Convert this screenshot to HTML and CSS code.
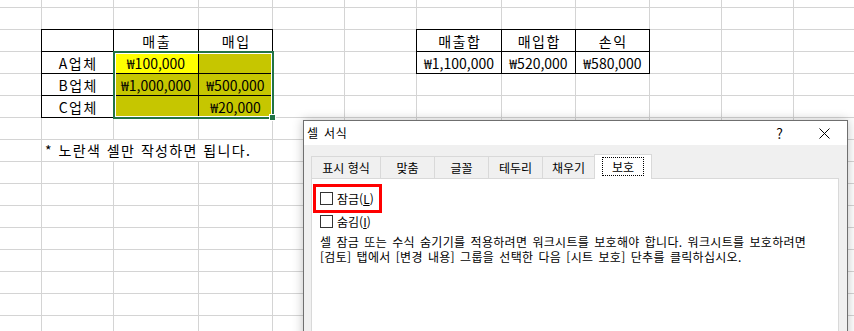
FILE: index.html
```html
<!DOCTYPE html>
<html lang="ko">

<head>
  <meta charset="UTF-8">
  <title>셀 서식</title>
  <link rel="stylesheet" href="styles.css">
</head>

<body>
  <div class="sheet">
    <div class="cell box c2 r3"></div>
    <div class="cell box kr c3 r3">매출</div>
    <div class="cell box kr c4 r3">매입</div>

    <div class="cell box kr c2 r4">A업체</div>
    <div class="cell box c3 r4 yellow">₩100,000</div>
    <div class="cell box c4 r4 olive"></div>

    <div class="cell box kr c2 r5">B업체</div>
    <div class="cell box c3 r5 olive">₩1,000,000</div>
    <div class="cell box c4 r5 olive">₩500,000</div>

    <div class="cell box kr c2 r6">C업체</div>
    <div class="cell box c3 r6 olive"></div>
    <div class="cell box c4 r6 olive">₩20,000</div>

    <div class="selection"><span class="handle"></span></div>

    <div class="cell box kr c7 r3">매출합</div>
    <div class="cell box kr c8 r3">매입합</div>
    <div class="cell box kr c9 r3">손익</div>
    <div class="cell box c7 r4">₩1,100,000</div>
    <div class="cell box c8 r4">₩520,000</div>
    <div class="cell box c9 r4">₩580,000</div>

    <div class="note">* 노란색 셀만 작성하면 됩니다.</div>
  </div>

  <div class="dialog">
    <div class="titlebar">
      <span class="title">셀 서식</span>
      <span class="tb-btn">?</span>
      <span class="tb-btn">
        <svg width="11" height="11" viewBox="0 0 11 11">
          <path d="M0.5 0.5 L10.5 10.5 M10.5 0.5 L0.5 10.5" stroke="#000" stroke-width="1" fill="none" />
        </svg>
      </span>
    </div>

    <div class="dlg-body">
      <div class="tabs">
        <div class="tab w1">표시 형식</div>
        <div class="tab w2">맞춤</div>
        <div class="tab w2">글꼴</div>
        <div class="tab w2">테두리</div>
        <div class="tab w3">채우기</div>
        <div class="tab active"><span class="focus">보호</span></div>
      </div>

      <div class="panel">
        <div class="check-row marked">
          <span class="checkbox"></span>
          <span>잠금(<u>L</u>)</span>
        </div>
        <div class="check-row">
          <span class="checkbox"></span>
          <span>숨김(<u>I</u>)</span>
        </div>
        <p class="desc">셀 잠금 또는 수식 숨기기를 적용하려면 워크시트를 보호해야 합니다. 워크시트를 보호하려면</p>
        <p class="desc">[검토] 탭에서 [변경 내용] 그룹을 선택한 다음 [시트 보호] 단추를 클릭하십시오.</p>
      </div>
    </div>
  </div>
</body>

</html>
```

FILE: styles.css
```css
body {
  margin: 0;
  font-family: "Noto Sans CJK KR", "Noto Sans", sans-serif;
  background-color: #fff;
  overflow: hidden;
}
.sheet {
  position: relative;
  display: grid;
  grid-template-columns: 42px 72px 85px 74px 72px 72px 85px 74px 74px 72px 72px 72px;
  grid-template-rows: 8px repeat(14, 22px);
  width: 854px;
  height: 331px;
  font-size: 14px;
  color: #000;
  background:
    linear-gradient(#d4d4d4, #d4d4d4) 41px 0 / 1px 100% no-repeat,
    linear-gradient(#d4d4d4, #d4d4d4) 113px 0 / 1px 100% no-repeat,
    linear-gradient(#d4d4d4, #d4d4d4) 198px 0 / 1px 100% no-repeat,
    linear-gradient(#d4d4d4, #d4d4d4) 272px 0 / 1px 100% no-repeat,
    linear-gradient(#d4d4d4, #d4d4d4) 344px 0 / 1px 100% no-repeat,
    linear-gradient(#d4d4d4, #d4d4d4) 416px 0 / 1px 100% no-repeat,
    linear-gradient(#d4d4d4, #d4d4d4) 501px 0 / 1px 100% no-repeat,
    linear-gradient(#d4d4d4, #d4d4d4) 575px 0 / 1px 100% no-repeat,
    linear-gradient(#d4d4d4, #d4d4d4) 649px 0 / 1px 100% no-repeat,
    linear-gradient(#d4d4d4, #d4d4d4) 721px 0 / 1px 100% no-repeat,
    linear-gradient(#d4d4d4, #d4d4d4) 793px 0 / 1px 100% no-repeat,
    linear-gradient(to bottom, #d4d4d4 1px, transparent 1px) 0 7px / 100% 22px repeat-y,
    #fff;
}
.cell {
  display: flex;
  align-items: center;
  justify-content: center;
  white-space: nowrap;
  line-height: 20px;
  padding-top: 1px;
  box-sizing: border-box;
}
.kr {
  letter-spacing: 1.5px;
  text-indent: 1.5px;
}
.box {
  margin: -1px 0 0 -1px;
  border: 1px solid #000;
  background-color: #fff;
}
.yellow {
  background-color: #ffff00;
}
.olive {
  background-color: #c6c600;
}
.c2 { grid-column: 2; }
.c3 { grid-column: 3; }
.c4 { grid-column: 4; }
.c7 { grid-column: 7; }
.c8 { grid-column: 8; }
.c9 { grid-column: 9; }
.r3 { grid-row: 3; }
.r4 { grid-row: 4; }
.r5 { grid-row: 5; }
.r6 { grid-row: 6; }

.selection {
  grid-column: 3 / 5;
  grid-row: 4 / 7;
  margin: -1px;
  border: 2px solid #217346;
  box-shadow: inset 0 0 0 1px #fff;
  position: relative;
  pointer-events: none;
}
.handle {
  position: absolute;
  right: -4px;
  bottom: -4px;
  width: 5px;
  height: 5px;
  background-color: #217346;
  border: 1px solid #fff;
}
.note {
  grid-column: 2 / 5;
  grid-row: 8;
  margin: 0 1px 1px 0;
  padding: 0 0 0 3px;
  background-color: #fff;
  white-space: nowrap;
  line-height: 21px;
  letter-spacing: 1.3px;
  word-spacing: 0.5px;
}

.dialog {
  position: absolute;
  left: 303px;
  top: 120px;
  width: 545px;
  height: 230px;
  border: 1px solid #6f6f6f;
  background-color: #f0f0f0;
  box-shadow: 0 0 10px rgba(0, 0, 0, 0.25);
  box-sizing: border-box;
  font-size: 12px;
  color: #000;
}
.titlebar {
  display: flex;
  align-items: center;
  height: 24px;
  background-color: #fff;
}
.title {
  flex: 1;
  padding-left: 3px;
  line-height: 24px;
  letter-spacing: 0.8px;
  word-spacing: 1px;
}
.tb-btn {
  width: 45px;
  height: 24px;
  display: flex;
  align-items: center;
  justify-content: center;
  font-size: 14px;
}
.dlg-body {
  padding: 11px 8px 0 7px;
}
.tabs {
  display: flex;
  height: 22px;
}
.tab {
  height: 22px;
  box-sizing: border-box;
  border: 1px solid #d9d9d9;
  border-bottom: none;
  margin-left: -1px;
  display: flex;
  align-items: center;
  justify-content: center;
  line-height: 16px;
}
.tab:first-child {
  margin-left: 0;
}
.w1 { width: 70px; }
.w2 { width: 55px; }
.w3 { width: 53px; }
.tab.active {
  width: 58px;
  height: 25px;
  margin-top: -2px;
  background-color: #fff;
  position: relative;
  z-index: 1;
  align-items: flex-start;
  padding-top: 2px;
}
.focus {
  border: 1px dotted #000;
  padding: 0 9px;
  line-height: 17px;
}
.panel {
  height: 200px;
  background-color: #fff;
  border: 1px solid #d9d9d9;
  padding: 5px 8px 0;
}
.check-row {
  display: flex;
  align-items: center;
  gap: 4px;
  height: 17px;
}
.check-row.marked {
  width: fit-content;
  height: 23px;
  margin-left: -7px;
  padding: 0 5px 0 4px;
  border: 3px solid #ff0000;
}
.checkbox {
  width: 13px;
  height: 13px;
  box-sizing: border-box;
  border: 1px solid #333;
  background-color: #fff;
}
.desc {
  margin: 0;
  height: 15px;
  line-height: 15px;
  white-space: nowrap;
  letter-spacing: 0.3px;
  word-spacing: 1.5px;
}
.check-row + .desc {
  margin-top: 4px;
}
```
